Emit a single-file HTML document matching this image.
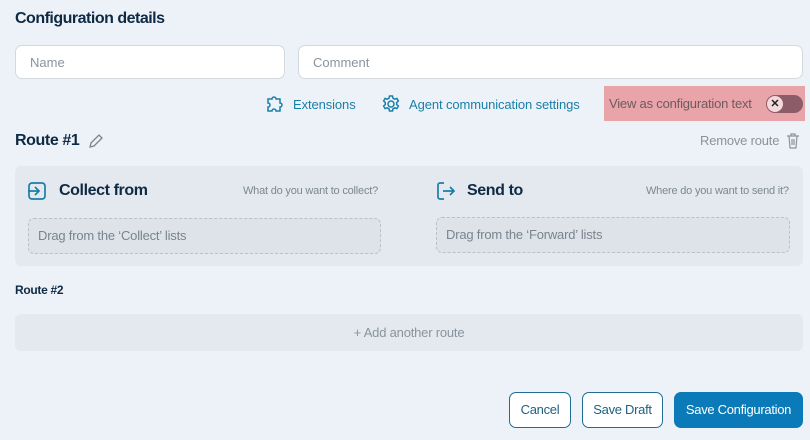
<!DOCTYPE html><html><head><style>
*{box-sizing:border-box;margin:0;padding:0}
body{width:810px;height:440px;background:#edf2f8;font-family:"Liberation Sans",sans-serif;position:relative;overflow:hidden;color:#0f2a44}
.a{position:absolute}
.inp{position:absolute;background:#fff;border:1px solid #d4d9de;border-radius:7px;height:34px;font-size:13px;color:#8a939c;padding:9px 14px}
.blue{color:#1a7fa8;font-size:13px;letter-spacing:-0.1px}
.btn{position:absolute;border:1px solid #1f6d94;border-radius:7px;height:36px;font-size:13px;color:#1f5f80;text-align:center;line-height:34px;background:#fff;letter-spacing:-0.3px}
</style></head><body>
<div class="a" style="left:15px;top:10px;font-size:16px;font-weight:bold;letter-spacing:-0.5px">Configuration details</div>
<div class="inp" style="left:15px;top:45px;width:270px">Name</div>
<div class="inp" style="left:298px;top:45px;width:505px">Comment</div>
<svg class="a" style="left:265px;top:95px" width="20" height="18" viewBox="0 0 20 18"><path d="M3 4h4a2 2 0 0 1 4 0h4v4a2 2 0 0 1 0 4v4h-4a2 2 0 0 0-4 0H3v-4a2 2 0 0 0 0-4z" fill="none" stroke="#1a7fa8" stroke-width="1.5"/></svg>
<div class="a blue" style="left:293px;top:97px">Extensions</div>
<svg class="a" style="left:381px;top:94px" width="20" height="20" viewBox="0 0 20 20"><circle cx="10" cy="10" r="3" fill="none" stroke="#1a7fa8" stroke-width="1.5"/><path d="M8.5 2h3l.5 2.2 1.8 1 2.1-.8 1.5 2.6-1.7 1.5v2l1.7 1.5-1.5 2.6-2.1-.8-1.8 1-.5 2.2h-3l-.5-2.2-1.8-1-2.1.8-1.5-2.6 1.7-1.5v-2L2.6 7l1.5-2.6 2.1.8 1.8-1z" fill="none" stroke="#1a7fa8" stroke-width="1.5"/></svg>
<div class="a blue" style="left:409px;top:97px">Agent communication settings</div>
<div class="a" style="left:604px;top:86px;width:201px;height:35px;background:#e8a4a8"></div>
<div class="a" style="left:609px;top:96px;font-size:13px;color:#6f5a5e;letter-spacing:-0.2px">View as configuration text</div>
<div class="a" style="left:766px;top:95px;width:37px;height:18px;border-radius:9px;background:#8c5d68"></div>
<div class="a" style="left:767px;top:96px;width:16px;height:16px;border-radius:8px;background:#f5d8db;font-size:11px;font-weight:bold;text-align:center;line-height:16px;color:#222">✕</div>
<div class="a" style="left:15px;top:132px;font-size:16px;font-weight:bold;letter-spacing:-0.4px">Route #1</div>
<svg class="a" style="left:88px;top:133px" width="16" height="16" viewBox="0 0 16 16"><path d="M2 14l1-4 8-8 3 3-8 8z" fill="none" stroke="#7a848e" stroke-width="1.3"/></svg>
<div class="a" style="left:700px;top:133px;font-size:13px;color:#8a939c;letter-spacing:-0.2px">Remove route</div>
<svg class="a" style="left:786px;top:133px" width="14" height="16" viewBox="0 0 14 16"><path d="M1 3h12M5 3V1h4v2M3 3l1 12h6l1-12M6 6v6M8 6v6" fill="none" stroke="#8a939c" stroke-width="1.2"/></svg>
<div class="a" style="left:15px;top:166px;width:788px;height:100px;background:#e3e9ef;border-radius:6px"></div>
<svg class="a" style="left:27px;top:181px" width="20" height="20" viewBox="0 0 20 20"><rect x="2" y="2" width="16" height="16" rx="3" fill="none" stroke="#1a7fa8" stroke-width="1.7"/><path d="M1 10h11M8 6l4 4-4 4" fill="none" stroke="#1a7fa8" stroke-width="1.7"/></svg>
<div class="a" style="left:59px;top:182px;font-size:16px;font-weight:bold;letter-spacing:-0.4px">Collect from</div>
<div class="a" style="left:243px;top:185px;font-size:11px;color:#7d8790;letter-spacing:-0.2px">What do you want to collect?</div>
<div class="a" style="left:28px;top:218px;width:353px;height:36px;border:1px dashed #b9c1c9;border-radius:6px;background:#dde3e9;font-size:13px;color:#7a848e;padding:9px 9px;letter-spacing:-0.2px">Drag from the ‘Collect’ lists</div>
<svg class="a" style="left:436px;top:181px" width="20" height="20" viewBox="0 0 20 20"><path d="M8 2H4a2 2 0 0 0-2 2v12a2 2 0 0 0 2 2h4M7 10h11M14 6l4 4-4 4" fill="none" stroke="#1a7fa8" stroke-width="1.7"/></svg>
<div class="a" style="left:467px;top:182px;font-size:16px;font-weight:bold;letter-spacing:-0.4px">Send to</div>
<div class="a" style="left:646px;top:185px;font-size:11px;color:#7d8790;letter-spacing:-0.2px">Where do you want to send it?</div>
<div class="a" style="left:436px;top:217px;width:354px;height:36px;border:1px dashed #b9c1c9;border-radius:6px;background:#dde3e9;font-size:13px;color:#7a848e;padding:9px 9px;letter-spacing:-0.2px">Drag from the ‘Forward’ lists</div>
<div class="a" style="left:15px;top:283px;font-size:12px;font-weight:bold;letter-spacing:-0.3px">Route #2</div>
<div class="a" style="left:15px;top:314px;width:788px;height:37px;background:#e3e9ef;border-radius:6px;text-align:center;line-height:37px;font-size:13px;color:#8a939c;letter-spacing:-0.2px">+ Add another route</div>
<div class="btn" style="left:509px;top:392px;width:62px">Cancel</div>
<div class="btn" style="left:582px;top:392px;width:81px">Save Draft</div>
<div class="btn" style="left:674px;top:392px;width:129px;background:#0b7ab8;border-color:#0b7ab8;color:#fff">Save Configuration</div>
</body></html>
